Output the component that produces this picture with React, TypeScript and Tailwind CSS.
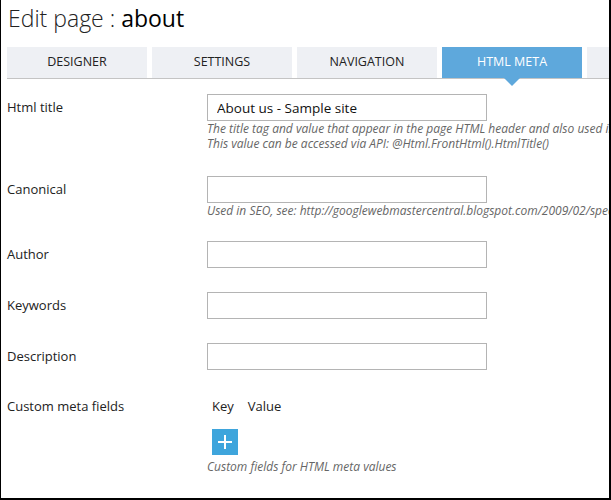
import React from 'react';

const tabs = ['DESIGNER', 'SETTINGS', 'NAVIGATION', 'HTML META', 'ADVANCED'];

// 单个输入行：左边标签，右边输入框和说明
const FieldRow = ({
  label,
  value,
  help,
  className,
}: {
  label: string;
  value?: string;
  help?: React.ReactNode;
  className?: string;
}) => (
  <div className={`flex items-start ${className || ''}`}>
    <div className="w-[206px] shrink-0 pl-[6px] text-[13px] leading-[27px] text-[#222]">{label}</div>
    <div className="flex-1 min-w-0 overflow-hidden flex flex-col whitespace-nowrap">
      <input
        readOnly
        value={value || ''}
        className="w-[280px] h-[27px] border border-[#b4b4b4] bg-white px-[9px] text-[13.5px] text-[#111] outline-none"
      />
      {help && <div className="text-[12px] italic leading-[15px] text-[#666]">{help}</div>}
    </div>
  </div>
);

export default function App() {
  return (
    <div
      className="w-[611px] h-[500px] overflow-hidden bg-white border-l border-r-2 border-b-2 border-black"
      style={{ fontFamily: '"Open Sans", "Noto Sans", sans-serif' }}
    >
      {/* 标题 */}
      <h1 className="pl-[7px] pt-[2px] h-[47px] text-[23px] leading-[32px] text-[#222] font-light whitespace-nowrap">
        Edit page : <span className="font-normal text-black">about</span>
      </h1>

      {/* 标签页 */}
      <div className="ml-[6px] flex gap-[5px] border-b border-[#c4c4c4]">
        {tabs.map((tab, i) => (
          <div
            key={tab}
            className={`relative w-[140px] h-[31px] shrink-0 flex items-center justify-center text-[12.5px] ${
              i === 3 ? 'bg-[#5ea8dc] text-white' : 'bg-[#eef0f4] text-[#222]'
            }`}
          >
            {tab}
            {i === 3 && (
              <span className="absolute left-1/2 top-[31px] -translate-x-1/2 w-0 h-0 border-l-[8px] border-r-[8px] border-t-[8px] border-l-transparent border-r-transparent border-t-[#5ea8dc] z-10" />
            )}
          </div>
        ))}
      </div>

      <FieldRow
        className="mt-[15px]"
        label="Html title"
        value="About us - Sample site"
        help={
          <>
            <div>The title tag and value that appear in the page HTML header and also used in</div>
            <div>This value can be accessed via API: @Html.FrontHtml().HtmlTitle()</div>
          </>
        }
      />
      <FieldRow
        className="mt-[25px]"
        label="Canonical"
        help={<div>Used in SEO, see: http://googlewebmastercentral.blogspot.com/2009/02/specify</div>}
      />
      <FieldRow className="mt-[23px]" label="Author" />
      <FieldRow className="mt-[24px]" label="Keywords" />
      <FieldRow className="mt-[24px]" label="Description" />

      {/* 自定义字段 */}
      <div className="mt-[28px] flex items-start">
        <div className="w-[206px] shrink-0 pl-[6px] text-[13px] leading-[17px] text-[#222]">Custom meta fields</div>
        <div className="flex flex-col">
          <div className="pl-[5px] flex gap-[14px] text-[13px] leading-[17px] text-[#222]">
            <span>Key</span>
            <span>Value</span>
          </div>
          <button className="ml-[5px] mt-[14px] w-[26px] h-[26px] bg-[#3ea5dc] flex items-center justify-center">
            <svg width="16" height="16" viewBox="0 0 16 16">
              <path d="M8 1v14M1 8h14" stroke="white" strokeWidth="2" />
            </svg>
          </button>
          <div className="mt-[4px] text-[12px] italic leading-[15px] text-[#666] whitespace-nowrap">
            Custom fields for HTML meta values
          </div>
        </div>
      </div>
    </div>
  );
}
